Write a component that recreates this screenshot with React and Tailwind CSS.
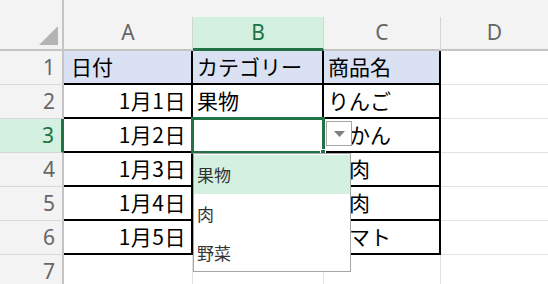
import React from 'react';

// B4:B6 sit under the open list, so they are left blank here
const rows = [
    { n: 1, a: '日付', b: 'カテゴリー', c: '商品名', head: true },
    { n: 2, a: '1月1日', b: '果物', c: 'りんご' },
    { n: 3, a: '1月2日', b: '', c: 'みかん', active: true },
    { n: 4, a: '1月3日', b: '', c: '豚肉' },
    { n: 5, a: '1月4日', b: '', c: '牛肉' },
    { n: 6, a: '1月5日', b: '', c: 'トマト' },
];

const options = ['果物', '肉', '野菜'];

const jp = { fontFamily: '"Noto Sans CJK JP", "Noto Sans", sans-serif' };
const ui = { fontFamily: '"Noto Sans", "Liberation Sans", sans-serif' };

const RowHead = ({ n, active }) => (
    <div
        style={ui}
        className={
            active
                ? 'w-[64px] shrink-0 h-full flex items-center justify-end pr-[7px] text-[21px] bg-[#d3f0e0] text-[#217346] border-r-[3px] border-[#217346] border-b border-b-[#d4d4d4]'
                : 'w-[64px] shrink-0 h-full flex items-center justify-end pr-[7px] text-[21px] bg-[#f3f3f3] text-[#666] border-r-2 border-[#c4c4c4] border-b border-b-[#d9d9d9]'
        }
    >
        {n}
    </div>
);

const Dropdown = () => (
    <>
        {/* selection frame */}
        <div className="absolute -left-[2px] -top-[2px] w-[134px] h-[37px] border-[3px] border-[#217346] z-10 pointer-events-none" />
        <div className="absolute left-[127px] top-[30px] w-[6px] h-[6px] bg-[#217346] border border-white z-10" />
        {/* arrow button */}
        <div className="absolute left-[133px] top-[2px] w-[26px] h-[25px] bg-white border border-[#a6a6a6] flex items-center justify-center z-10">
            <svg width="11" height="6" viewBox="0 0 11 6">
                <path d="M0 0 L11 0 L5.5 6 Z" fill="#7f7f7f" />
            </svg>
        </div>
        {/* list */}
        <div className="absolute left-0 top-[34px] w-[158px] h-[119px] bg-white border border-[#a6a6a6] pt-[1px] z-20">
            {options.map((o, i) => (
                <div
                    key={o}
                    style={jp}
                    className={`h-[39px] flex items-center pl-[3px] text-[17px] text-[#333] ${i === 0 ? 'bg-[#d3f0e0]' : ''}`}
                >
                    {o}
                </div>
            ))}
        </div>
    </>
);

export default function App() {
    return (
        <div className="w-[548px] h-[284px] overflow-hidden bg-white select-none">
            {/* Column headers */}
            <div className="flex h-[51px] bg-[#f3f3f3]">
                <div className="w-[64px] shrink-0 h-full border-r-2 border-b-2 border-[#c4c4c4] relative">
                    <svg className="absolute left-[39px] top-[26px]" width="20" height="20" viewBox="0 0 20 20">
                        <path d="M19 0 L19 19 L0 19 Z" fill="#b4b4b4" />
                    </svg>
                </div>
                <div className="flex-1 flex flex-col">
                    <div className="h-[20px]" />
                    <div className="flex flex-1 text-[21px]" style={ui}>
                        <div className="w-[129px] flex items-center justify-center text-[#666] border-r border-[#d4d4d4] border-b-2 border-b-[#c4c4c4]">A</div>
                        <div className="w-[131px] flex items-center justify-center text-[#217346] bg-[#d3f0e0] border-r border-[#d4d4d4] border-b-[3px] border-b-[#217346]">B</div>
                        <div className="w-[117px] flex items-center justify-center text-[#666] border-r border-[#d4d4d4] border-b-2 border-b-[#c4c4c4]">C</div>
                        <div className="flex-1 flex items-center justify-center text-[#666] border-b-2 border-b-[#c4c4c4]">D</div>
                    </div>
                </div>
            </div>

            {/* Data rows */}
            {rows.map((r) => (
                <div key={r.n} className="flex h-[34px]">
                    <RowHead n={r.n} active={r.active} />
                    <div
                        style={jp}
                        className={`w-[129px] shrink-0 border-r-2 border-b-2 border-black flex items-center text-[21px] text-black ${r.head ? 'bg-[#d9e1f2] pl-[7px]' : 'justify-end pr-[5px] tracking-[0.5px]'}`}
                    >
                        {r.a}
                    </div>
                    <div
                        style={jp}
                        className={`relative w-[131px] shrink-0 border-r-2 border-b-2 border-black flex items-center pl-[4px] text-[21px] text-black ${r.head ? 'bg-[#d9e1f2]' : 'bg-white'}`}
                    >
                        {r.b}
                        {r.active && <Dropdown />}
                    </div>
                    <div
                        style={jp}
                        className={`w-[117px] shrink-0 border-r-2 border-b-2 border-black flex items-center pl-[4px] text-[21px] text-black whitespace-nowrap overflow-hidden ${r.head ? 'bg-[#d9e1f2]' : ''}`}
                    >
                        {r.c}
                    </div>
                    <div className="flex-1 border-b border-[#e1e1e1]" />
                </div>
            ))}

            {/* Row 7 */}
            <div className="flex h-[34px]">
                <RowHead n={7} />
                <div className="w-[129px] shrink-0 border-r border-[#e1e1e1]" />
                <div className="w-[131px] shrink-0 border-r border-[#e1e1e1]" />
                <div className="w-[117px] shrink-0 border-r border-[#e1e1e1]" />
                <div className="flex-1" />
            </div>
        </div>
    );
}
